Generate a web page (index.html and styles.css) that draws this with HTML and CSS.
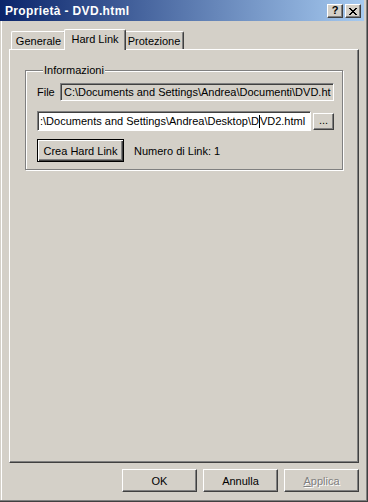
FILE: index.html
```html
<!DOCTYPE html>
<html lang="it">
<head>
    <meta charset="UTF-8">
    <title>Proprietà - DVD.html</title>
    <link rel="stylesheet" href="styles.css">
</head>
<body>
    <div class="window">
        <!-- Barra del titolo -->
        <div class="titlebar">
            <div class="title">Proprietà - DVD.html</div>
            <div class="title-buttons">
                <div class="title-btn help">?</div>
                <div class="title-btn close">
                    <svg width="8" height="7" viewBox="0 0 8 7" shape-rendering="crispEdges">
                        <path d="M0 0h2v1h-2zM6 0h2v1h-2zM1 1h2v1h-2zM5 1h2v1h-2zM2 2h4v1h-4zM3 3h2v1h-2zM2 4h4v1h-4zM1 5h2v1h-2zM5 5h2v1h-2zM0 6h2v1h-2zM6 6h2v1h-2z" fill="#000"/>
                    </svg>
                </div>
            </div>
        </div>

        <div class="content">
            <!-- Schede -->
            <div class="tabs">
                <div class="tab tab-generale">Generale</div>
                <div class="tab tab-hardlink selected">Hard Link</div>
                <div class="tab tab-protezione">Protezione</div>
            </div>

            <div class="panel">
                <fieldset class="group">
                    <legend>Informazioni</legend>
                    <div class="row row-file">
                        <span class="label-file">File</span>
                        <div class="field readonly">C:\Documents and Settings\Andrea\Documenti\DVD.ht</div>
                    </div>
                    <div class="row row-target">
                        <div class="field input">:\Documents and Settings\Andrea\Desktop\D<span class="caret"></span>VD2.html</div>
                        <button class="btn btn-browse">...</button>
                    </div>
                    <div class="row row-create">
                        <button class="btn btn-default">Crea Hard Link</button>
                        <span class="link-count">Numero di Link: 1</span>
                    </div>
                </fieldset>
            </div>

            <!-- Pulsanti -->
            <div class="dialog-buttons">
                <button class="btn btn-dialog">OK</button>
                <button class="btn btn-dialog">Annulla</button>
                <button class="btn btn-dialog disabled"><u>A</u>pplica</button>
            </div>
        </div>
    </div>
</body>
</html>
```

FILE: styles.css
```css
* {
    margin: 0;
    padding: 0;
    box-sizing: border-box;
    font-family: 'Liberation Sans', Arial, sans-serif;
}

body {
    background-color: #d4d0c8;
    width: 368px;
    height: 502px;
    overflow: hidden;
}

.window {
    width: 368px;
    height: 502px;
    background-color: #d4d0c8;
    padding: 0 4px 4px 0;
    box-shadow: inset -1px -1px 0 #404040, inset -2px -2px 0 #808080, inset 1px 0 0 #d4d0c8, inset 2px 0 0 #fff;
    font-size: 11px;
    color: #000;
}

.titlebar {
    height: 21px;
    background: linear-gradient(to right, #0a246a, #a6caf0);
    display: flex;
    align-items: center;
    justify-content: space-between;
    padding: 0 3px 0 5px;
}

.title {
    color: #fff;
    font-weight: bold;
    font-size: 12px;
    letter-spacing: 0.35px;
}

.title-buttons {
    display: flex;
    gap: 2px;
    margin-top: 1px;
}

.title-btn {
    width: 16px;
    height: 14px;
    background-color: #d4d0c8;
    border: 1px solid;
    border-color: #fff #404040 #404040 #fff;
    box-shadow: inset -1px -1px 0 #808080;
    display: flex;
    align-items: center;
    justify-content: center;
    font-weight: bold;
    font-size: 11px;
    line-height: 1;
}

.title-btn.help {
    padding-bottom: 1px;
}

.title-btn.close svg {
    display: block;
    margin-left: -1px;
}

.content {
    padding: 8px 5px 0 9px;
}

.tabs {
    display: flex;
    align-items: flex-end;
    padding-left: 2px;
    height: 20px;
}

.tab {
    height: 18px;
    background-color: #d4d0c8;
    border: 1px solid;
    border-bottom: none;
    border-color: #fff #404040 #404040 #fff;
    border-radius: 2px 2px 0 0;
    box-shadow: inset -1px 0 0 #808080;
    display: flex;
    align-items: center;
    justify-content: center;
    padding-top: 1px;
}

.tab-generale {
    width: 55px;
}

.tab-hardlink {
    width: 58px;
}

.tab-protezione {
    width: 60px;
}

.tab.selected {
    width: 62px;
    height: 21px;
    margin: 0 -2px -1px;
    z-index: 1;
    padding-top: 0;
    padding-bottom: 3px;
}

.panel {
    height: 414px;
    border: 1px solid;
    border-color: #fff #404040 #404040 #fff;
    box-shadow: inset -1px -1px 0 #808080;
    padding: 14px 14px 0 15px;
}

.group {
    border: 1px solid #808080;
    box-shadow: inset 1px 1px 0 #fff, 1px 1px 0 #fff;
    padding: 6px 8px 7px 11px;
    width: 318px;
    min-width: 0;
}

.group legend {
    background-color: #d4d0c8;
    padding: 0 1px;
    margin-left: 6px;
    line-height: 13px;
}

.row {
    display: flex;
    align-items: center;
}

.label-file {
    width: 23px;
    flex-shrink: 0;
}

.field {
    border: 1px solid;
    border-color: #808080 #fff #fff #808080;
    box-shadow: inset 1px 1px 0 #404040;
    white-space: nowrap;
    overflow: hidden;
    padding-left: 3px;
    display: flex;
    align-items: center;
    min-width: 0;
}

.field.readonly {
    flex: 1;
    height: 18px;
    background-color: #d4d0c8;
}

.row-target {
    margin-top: 10px;
    gap: 2px;
}

.field.input {
    flex: 1;
    height: 20px;
    background-color: #fff;
    padding-left: 2px;
}

.caret {
    display: inline-block;
    width: 1px;
    height: 13px;
    background-color: #000;
}

.btn {
    background-color: #d4d0c8;
    border: 1px solid;
    border-color: #fff #404040 #404040 #fff;
    box-shadow: inset -1px -1px 0 #808080;
    font-size: 11px;
    color: #000;
    display: flex;
    align-items: center;
    justify-content: center;
    flex-shrink: 0;
}

.btn-browse {
    width: 21px;
    height: 17px;
    padding-bottom: 3px;
}

.row-create {
    margin-top: 8px;
    gap: 10px;
}

.btn-default {
    width: 87px;
    height: 23px;
    border: 1px solid #000;
    box-shadow: inset 1px 1px 0 #fff, inset -1px -1px 0 #404040, inset -2px -2px 0 #808080;
}

.dialog-buttons {
    display: flex;
    justify-content: flex-end;
    gap: 6px;
    margin-top: 6px;
}

.btn-dialog {
    width: 75px;
    height: 23px;
}

.btn-dialog.disabled {
    color: #808080;
    text-shadow: 1px 1px 0 #fff;
}
```
